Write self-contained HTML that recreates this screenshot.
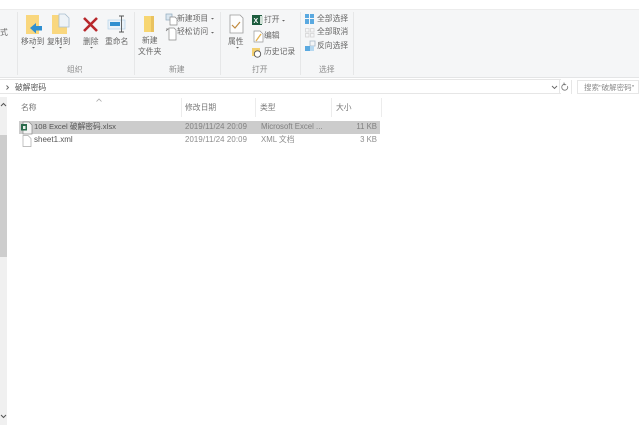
<!DOCTYPE html>
<html><head><meta charset="utf-8">
<style>
html,body{margin:0;padding:0;background:#fff}
#r{position:relative;width:639px;height:434px;overflow:hidden;background:#fff;font-family:"Liberation Sans","Noto Sans CJK SC",sans-serif;font-size:7.800px;color:#666}
.t{position:absolute;white-space:nowrap;line-height:10px;filter:blur(.35px);z-index:3}
.b{position:absolute}
svg{position:absolute;left:0;top:0;z-index:2;filter:blur(.25px)}
.g{color:#8c8c8c}
</style></head><body><div id="r">
<div class="b" style="left:0;top:9px;width:639px;height:69px;background:#f5f6f7"></div>
<div class="b" style="left:0;top:9px;width:639px;height:1px;background:#ececec"></div>
<div class="b" style="left:0;top:77px;width:639px;height:1px;background:#e4e5e6"></div>
<div class="b" style="left:17px;top:12px;width:1px;height:63px;background:#e6e7e8"></div>
<div class="b" style="left:134px;top:12px;width:1px;height:63px;background:#e6e7e8"></div>
<div class="b" style="left:220px;top:12px;width:1px;height:63px;background:#e6e7e8"></div>
<div class="b" style="left:300px;top:12px;width:1px;height:63px;background:#e6e7e8"></div>
<div class="b" style="left:353px;top:12px;width:1px;height:63px;background:#e6e7e8"></div>

<!-- address bar -->
<div class="b" style="left:0;top:79px;width:561px;height:15px;background:#fff;border-top:1px solid #e6e6e6;border-bottom:1px solid #e6e6e6;box-sizing:border-box"></div>
<div class="b" style="left:559px;top:80px;width:1px;height:14px;background:#e6e6e6"></div>
<div class="b" style="left:571px;top:80px;width:1px;height:14px;background:#e6e6e6"></div>
<div class="b" style="left:577px;top:80px;width:62px;height:14px;border:1px solid #e6e6e6;box-sizing:border-box"></div>

<!-- scrollbar -->
<div class="b" style="left:0;top:97px;width:7px;height:328px;background:#f0f0f0"></div>
<div class="b" style="left:0;top:135px;width:7px;height:122px;background:#cdcdcd"></div>

<!-- selected row -->
<div class="b" style="left:19px;top:121px;width:361px;height:13px;background:#cccccc"></div>

<svg width="639" height="434" viewBox="0 0 639 434">
<!-- move to -->
<rect x="26" y="15" width="13" height="19" fill="#f9d77e"/>
<path d="M30 28l6-5v3h6v4.500h-6v3z" fill="#2f8fd0"/>
<!-- copy to -->
<rect x="52" y="15" width="15" height="19" fill="#f9d77e"/>
<path d="M59 14h6l4 4v9h-10z" fill="#eef3f7" stroke="#a9bfd0" stroke-width=".8"/>
<!-- delete -->
<path d="M84 18l13 13M97 18l-13 13" stroke="#b8282c" stroke-width="2.600" fill="none"/>
<!-- rename -->
<rect x="108" y="20" width="17" height="9" fill="#e9f2f9" stroke="#b4d2e8" stroke-width=".7"/>
<rect x="110" y="22" width="10" height="4" fill="#2f8fd0"/>
<path d="M119 16h5M119 32h5M121.500 16v16" stroke="#555" stroke-width=".9" fill="none"/>
<!-- new folder -->
<rect x="144" y="16" width="10" height="16" fill="#f7d672"/>
<rect x="151" y="16" width="3" height="16" fill="#e9c25f"/>
<!-- new item -->
<rect x="166" y="14" width="6" height="6" fill="#dbe7f0" stroke="#8fa9bd" stroke-width=".7"/>
<path d="M170 17h5l2 2v6h-7z" fill="#fff" stroke="#8a8a8a" stroke-width=".7"/>
<!-- easy access -->
<path d="M169 28h5l2 2v10h-7z" fill="#fff" stroke="#8a8a8a" stroke-width=".7"/>
<path d="M166 31l2-2M166 29h3" stroke="#777" stroke-width=".7"/>
<!-- properties -->
<path d="M230 15h10l3 3v15h-13z" fill="#fdfdfd" stroke="#9a9a9a" stroke-width=".8"/>
<path d="M232 25l3 3 5-6" stroke="#c08a3e" stroke-width="1.200" fill="none"/>
<!-- excel open -->
<rect x="252" y="15" width="10" height="10" fill="#1d5c3e"/>
<rect x="260" y="16" width="3" height="8" fill="#cfe0d6"/>
<text x="253.500" y="23" font-size="7" font-family="Liberation Sans" font-weight="bold" fill="#fff">X</text>
<!-- edit -->
<path d="M254 31h6l3 3v8h-9z" fill="#fff" stroke="#999" stroke-width=".7"/>
<path d="M256 41l5-7" stroke="#e1b04c" stroke-width="1.300"/>
<!-- history -->
<rect x="252" y="48" width="8" height="8" fill="#f3d070"/>
<circle cx="257.500" cy="54" r="3.200" fill="#fff" stroke="#555" stroke-width=".9"/>
<!-- select all -->
<g fill="#5aa9e0"><rect x="305" y="14" width="4" height="4"/><rect x="310" y="14" width="4" height="4"/><rect x="305" y="19" width="4" height="5"/><rect x="310" y="19" width="4" height="5"/></g>
<g fill="none" stroke="#d4d4d4" stroke-width=".8"><rect x="305.500" y="28.500" width="3.500" height="3.500"/><rect x="310.500" y="28.500" width="3.500" height="3.500"/><rect x="305.500" y="33.500" width="3.500" height="3.500"/><rect x="310.500" y="33.500" width="3.500" height="3.500"/></g>
<g><rect x="310" y="41" width="5" height="5" fill="none" stroke="#a8b8c6" stroke-width=".8"/><rect x="305" y="46" width="5" height="5" fill="#5aa9e0"/><rect x="310" y="46" width="4" height="5" fill="#b6d8f0"/></g>
<!-- small arrows -->
<g fill="#666"><path d="M32 47h3l-1.500 1.500zM59 47h3l-1.500 1.500zM90 47h3l-1.500 1.500zM236 47h3l-1.500 1.500zM211 18h3l-1.500 1.500zM211 32h3l-1.500 1.500zM282 20h3l-1.500 1.500z"/></g>
<!-- address chevrons -->
<path d="M6.500 85.500l2 2-2 2" stroke="#666" fill="none" stroke-width=".9"/>
<path d="M552 86l2.500 2.500 2.500-2.500" stroke="#666" fill="none" stroke-width=".9"/>
<path d="M567.500 86a3 3 0 1 1-2.500-1.800M564 82.500v2.200h2.200" stroke="#777" fill="none" stroke-width=".8"/>
<!-- sort arrow -->
<path d="M96.500 101.500l2.500-2.500 2.500 2.500" stroke="#aaa" fill="none" stroke-width=".8"/>
<!-- scrollbar arrows -->
<path d="M1 106l2.500-2.500 2.500 2.500M1 415l2.500 2.500 2.500-2.500" stroke="#555" fill="none" stroke-width="1"/>
<!-- file icons -->
<path d="M23 122h6l3 3v9h-9z" fill="#f4f4f4" stroke="#888" stroke-width=".7"/>
<rect x="21" y="124" width="6" height="6.500" fill="#2a6b4c"/>
<rect x="23" y="126" width="2.500" height="3" fill="#e8f0ea"/>
<path d="M23 135.500h5l3 3v8h-8z" fill="#fff" stroke="#aaa" stroke-width=".7"/>
</svg>

<div class="t" style="left:0;top:28px">式</div>
<div class="t" style="left:21px;top:37px">移动到</div>
<div class="t" style="left:47px;top:37px">复制到</div>
<div class="t" style="left:83px;top:37px">删除</div>
<div class="t" style="left:105px;top:37px">重命名</div>
<div class="t" style="left:142px;top:36px">新建</div>
<div class="t" style="left:138px;top:47px">文件夹</div>
<div class="t" style="left:177px;top:14px">新建项目</div>
<div class="t" style="left:177px;top:27px">轻松访问</div>
<div class="t" style="left:228px;top:37px">属性</div>
<div class="t" style="left:264px;top:15px">打开</div>
<div class="t" style="left:264px;top:31px">编辑</div>
<div class="t" style="left:264px;top:47px">历史记录</div>
<div class="t" style="left:317px;top:14px">全部选择</div>
<div class="t" style="left:317px;top:27px">全部取消</div>
<div class="t" style="left:317px;top:41px">反向选择</div>
<div class="t g" style="left:67px;top:65px">组织</div>
<div class="t g" style="left:169px;top:65px">新建</div>
<div class="t g" style="left:252px;top:65px">打开</div>
<div class="t g" style="left:319px;top:65px">选择</div>

<div class="t" style="left:15px;top:83px;color:#555">破解密码</div>
<div class="t g" style="left:584px;top:83px;font-size:7.500px">搜索"破解密码"</div>

<!-- columns -->
<div class="b" style="left:181px;top:98px;width:1px;height:19px;background:#ececec"></div>
<div class="b" style="left:255px;top:98px;width:1px;height:19px;background:#ececec"></div>
<div class="b" style="left:331px;top:98px;width:1px;height:19px;background:#ececec"></div>
<div class="b" style="left:381px;top:98px;width:1px;height:19px;background:#ececec"></div>
<div class="t" style="left:21px;top:103px;color:#777">名称</div>
<div class="t" style="left:185px;top:103px;color:#777">修改日期</div>
<div class="t" style="left:260px;top:103px;color:#777">类型</div>
<div class="t" style="left:336px;top:103px;color:#777">大小</div>

<div class="t" style="left:34px;top:122px;color:#555;font-size:7.700px">108 Excel 破解密码.xlsx</div>
<div class="t" style="left:34px;top:135px;color:#555;font-size:8px">sheet1.xml</div>
<div class="t g" style="left:185px;top:122px;color:#808080;letter-spacing:.12px">2019/11/24 20:09</div>
<div class="t g" style="left:185px;top:135px;letter-spacing:.12px">2019/11/24 20:09</div>
<div class="t g" style="left:261px;top:122px;color:#808080">Microsoft Excel ...</div>
<div class="t g" style="left:261px;top:135px">XML 文档</div>
<div class="t g" style="left:340px;top:122px;width:37px;text-align:right;color:#808080">11 KB</div>
<div class="t g" style="left:340px;top:135px;width:37px;text-align:right">3 KB</div>
</div></body></html>
